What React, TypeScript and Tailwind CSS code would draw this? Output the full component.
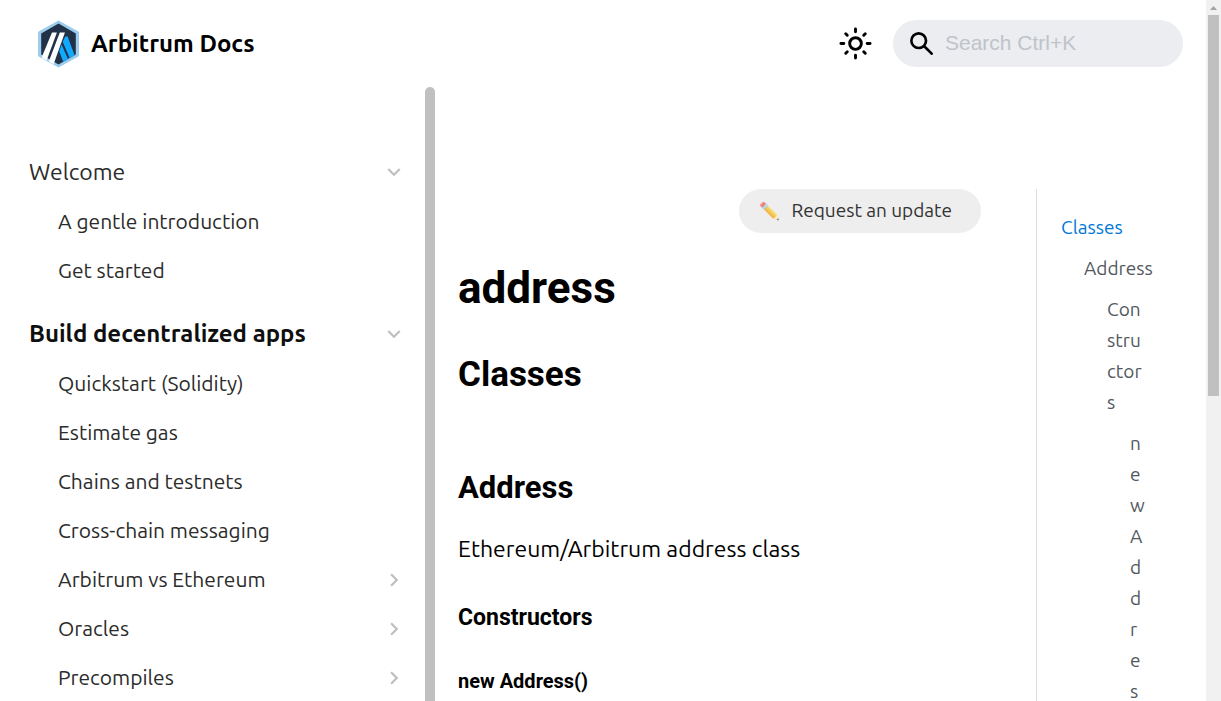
import React from "react";

type Item = { label: string; expandable?: boolean };
type Group = { label: string; active?: boolean; items: Item[] };

const groups: Group[] = [
  {
    label: "Welcome",
    items: [{ label: "A gentle introduction" }, { label: "Get started" }],
  },
  {
    label: "Build decentralized apps",
    active: true,
    items: [
      { label: "Quickstart (Solidity)" },
      { label: "Estimate gas" },
      { label: "Chains and testnets" },
      { label: "Cross-chain messaging" },
      { label: "Arbitrum vs Ethereum", expandable: true },
      { label: "Oracles", expandable: true },
      { label: "Precompiles", expandable: true },
    ],
  },
];

function Chevron({ open }: { open?: boolean }) {
  return (
    <svg
      viewBox="0 0 24 24"
      className={open ? "size-[26px] rotate-180" : "size-[26px] rotate-90"}
      fill="#bfbfbf"
      aria-hidden="true"
    >
      <path d="M7.41 15.41L12 10.83l4.59 4.58L18 14l-6-6-6 6z" />
    </svg>
  );
}

function Logo() {
  return (
    <svg viewBox="0 0 42 48" className="h-12 w-[42px]" aria-hidden="true">
      <path d="M20.5 1 40.500 12V36L20.500 47 .5 36V12Z" fill="#9dcced" stroke="#9dcced" strokeLinejoin="round" />
      <path d="M20.500 3.600 37.800 13.500V34.500L20.500 44.400 3.200 34.500V13.500Z" fill="#213147" />
      <path d="M27.300 16.500 29.600 16.500 36.600 35.200 31.600 38.100 24.700 21.800Z" fill="#12aaff" />
      <path d="M23.600 24.500 30 38.900 25.200 41.800 21.200 31Z" fill="#12aaff" />
      <path d="M14 12.600H18.900L8.600 40.600 4 38V36.400Z" fill="#fff" />
      <path d="M21.800 12.600H26.900L15.600 44.200 10.800 41.600Z" fill="#fff" />
    </svg>
  );
}

function SunIcon() {
  return (
    <svg viewBox="0 0 24 24" className="size-[35px]" fill="none" stroke="#000" strokeWidth="2" strokeLinecap="round" aria-hidden="true">
      <circle cx="12" cy="12" r="4" />
      <path d="M12 2v2M12 20v2M2 12h2M20 12h2M5.3 5.3l1.05 1.05M17.65 17.65l1.05 1.05M18.7 5.3l-1.05 1.05M6.35 17.65L5.3 18.7" />
    </svg>
  );
}

function Header() {
  return (
    <header className="flex h-[87px] shrink-0 items-center justify-between pr-[23px] pl-[38px]">
      <a href="#home" className="flex items-center gap-[11px] text-[24px] leading-9 font-bold text-black">
        <Logo />
        Arbitrum Docs
      </a>
      <div className="flex items-center gap-5">
        <button type="button" aria-label="Toggle colour mode">
          <SunIcon />
        </button>
        <label className="flex h-[47px] w-[290px] items-center gap-3 rounded-full bg-[#ebedf0] px-[17px]">
          <svg viewBox="0 0 16 16" className="size-[23px] shrink-0" aria-hidden="true">
            <path d="M6.02945,10.20327a4.17382,4.17382,0,1,1,4.17382-4.17382A4.15609,4.15609,0,0,1,6.02945,10.20327Zm9.69195,4.2199L10.8989,9.59979A5.88021,5.88021,0,0,0,12.058,6.02856,6.00467,6.00467,0,1,0,6.02856,12.058,5.88021,5.88021,0,0,0,9.59979,10.8989l4.82338,4.82338a.89729.89729,0,0,0,1.29912,0,.89749.89749,0,0,0-.00087-1.29909Z" />
          </svg>
          <input
            type="search"
            aria-label="Search"
            placeholder="Search Ctrl+K"
            className="min-w-0 flex-1 bg-transparent pb-0.5 font-['Liberation_Sans',sans-serif] text-[21px] outline-none placeholder:text-[#bfc3ca]"
          />
        </label>
      </div>
    </header>
  );
}

function Sidebar() {
  return (
    <aside className="flex w-[435px] shrink-0 overflow-hidden">
      <nav aria-label="Docs" className="flex-1 pt-[60px] pr-[18px] pl-[29px]">
        {groups.map((g) => (
          <section key={g.label} className="mb-[14px]">
            <div className="flex h-[50px] items-center justify-between">
              <a href="#group" className={g.active ? "text-[24px] font-bold text-[#0f0f0f]" : "text-[23px] text-[#2b2b2b]"}>
                {g.label}
              </a>
              <button type="button" aria-label={`Collapse ${g.label}`}>
                <Chevron open />
              </button>
            </div>
            <ul className="pl-[29px]">
              {g.items.map((it) => (
                <li key={it.label} className="flex h-[49px] items-center justify-between">
                  <a href="#item" className="text-[21px] text-[#2b2b2b]">
                    {it.label}
                  </a>
                  {it.expandable && (
                    <button type="button" aria-label={`Expand ${it.label}`}>
                      <Chevron />
                    </button>
                  )}
                </li>
              ))}
            </ul>
          </section>
        ))}
      </nav>
      <div className="w-[10px] rounded-t-full bg-[#c0c0c0]" />
    </aside>
  );
}

function Article() {
  return (
    <article className="min-w-0 flex-1 pt-[102px] font-['Roboto',sans-serif] font-bold text-black">
      <div className="flex justify-end">
        <a
          href="#update"
          className="flex h-11 items-center gap-3 rounded-full bg-[#eee] pr-[29px] pb-px pl-5 font-['Ubuntu','Noto_Sans',sans-serif] text-[19px] leading-[29px] font-normal text-[#333]"
        >
          <span className="w-5 text-[17px] opacity-70">✏️</span>
          Request an update
        </a>
      </div>
      <h1 className="mt-[27px] text-[44px] leading-[56px]">address</h1>
      <h2 className="mt-9 text-[35px] leading-[46px]">Classes</h2>
      <h3 className="mt-[70px] text-[31px] leading-10">Address</h3>
      <p className="mt-[23px] font-['Ubuntu','Noto_Sans',sans-serif] text-[23px] leading-9 font-normal">
        Ethereum/Arbitrum address class
      </p>
      <h4 className="mt-9 text-[23px] leading-[30px]">Constructors</h4>
      <h5 className="mt-[35px] text-[20px] leading-[26px]">new Address()</h5>
    </article>
  );
}

function Toc() {
  return (
    <nav aria-label="On this page" className="mt-[102px] ml-[55px] w-[170px] shrink-0 border-l border-[#dadde1] pt-[23px] pr-[62px] pl-6 text-[19px] leading-[31px] text-[#525860]">
      <a href="#classes" className="text-[#0077d8]">Classes</a>
      <ul className="-mr-[10px] pl-[23px]">
        <li className="pt-[10px]">
          <a href="#address">Address</a>
          <ul className="mr-[10px] pl-[23px]">
            <li className="pt-[10px] break-all">
              <a href="#constructors">Constructors</a>
              <ul className="pl-[23px]">
                <li className="pt-[10px]">
                  <a href="#new-address">new Address</a>
                </li>
              </ul>
            </li>
          </ul>
        </li>
      </ul>
    </nav>
  );
}

function PageScrollbar() {
  return (
    <div className="flex w-[15px] shrink-0 flex-col items-center bg-[#f1f1f1]" aria-hidden="true">
      <svg viewBox="0 0 15 15" className="size-[15px]">
        <path d="M4 10h7L7.500 6z" fill="#a3a3a3" />
      </svg>
      <div className="h-[381px] w-[11px] bg-[#c0c0c0]" />
    </div>
  );
}

export default function App() {
  return (
    <div className="flex h-screen overflow-hidden bg-white font-['Ubuntu','Noto_Sans',sans-serif]">
      <div className="flex min-w-0 flex-1 flex-col">
        <Header />
        <div className="flex min-h-0 flex-1">
          <Sidebar />
          <main className="flex min-w-0 flex-1 overflow-hidden pl-[23px]">
            <Article />
            <Toc />
          </main>
        </div>
      </div>
      <PageScrollbar />
    </div>
  );
}
